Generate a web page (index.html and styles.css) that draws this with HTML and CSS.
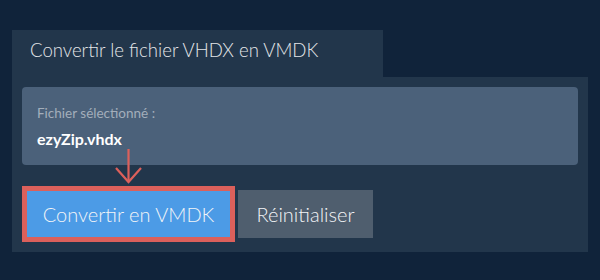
FILE: index.html
```html
<!DOCTYPE html>
<html>
<head>
    <title>Convertir VHDX en VMDK</title>
    <link rel="stylesheet" href="styles.css">
</head>
<body>
    <div class="converter">
        <div class="tab">Convertir le fichier VHDX en VMDK</div>
        <div class="panel">
            <div class="file-box">
                <div class="file-label">Fichier sélectionné :</div>
                <div class="file-name">ezyZip.vhdx</div>
                <svg class="arrow" width="27" height="35" viewBox="0 0 27 35">
                    <line x1="13.5" y1="0" x2="13.5" y2="33" stroke="#dc605b" stroke-width="2.2"/>
                    <polyline points="1,19 13.5,33 26,19" fill="none" stroke="#dc605b" stroke-width="2.2"/>
                </svg>
            </div>
            <div class="actions">
                <button class="btn-convert">Convertir en VMDK</button>
                <button class="btn-reset">Réinitialiser</button>
            </div>
        </div>
    </div>
</body>
</html>
```

FILE: styles.css
```css
body {
    margin: 0;
    padding: 30px 12px 28px 12px;
    background-color: #10233a;
    font-family: Lato, "Open Sans", sans-serif;
}
.tab {
    display: inline-block;
    background-color: #22364b;
    color: #e4e6e9;
    font-size: 18.6px;
    font-weight: 300;
    line-height: 24px;
    padding: 8px 0 15px 18px;
    width: 353px;
}
.panel {
    background-color: #22364b;
    padding: 10px;
}
.file-box {
    position: relative;
    background-color: #4b617a;
    border-radius: 4px;
    padding: 17px 15px 16px 15px;
}
.file-label {
    font-size: 13.5px;
    line-height: 18px;
    color: #a3aebb;
}
.file-name {
    margin-top: 7px;
    font-size: 16px;
    font-weight: bold;
    line-height: 20px;
    color: #ffffff;
}
.arrow {
    position: absolute;
    left: 93px;
    top: 62px;
}
.actions {
    display: flex;
    align-items: center;
    gap: 3px;
    margin-top: 21px;
}
button {
    font-family: Lato, "Open Sans", sans-serif;
    font-size: 20px;
    font-weight: 300;
    color: #f2f4f7;
    border: none;
    cursor: pointer;
}
.btn-convert {
    background-color: #4c9be6;
    border: 5px solid #dc605b;
    width: 213px;
    height: 56px;
}
.btn-reset {
    background-color: #4f5e6e;
    width: 135px;
    height: 48px;
}
```
